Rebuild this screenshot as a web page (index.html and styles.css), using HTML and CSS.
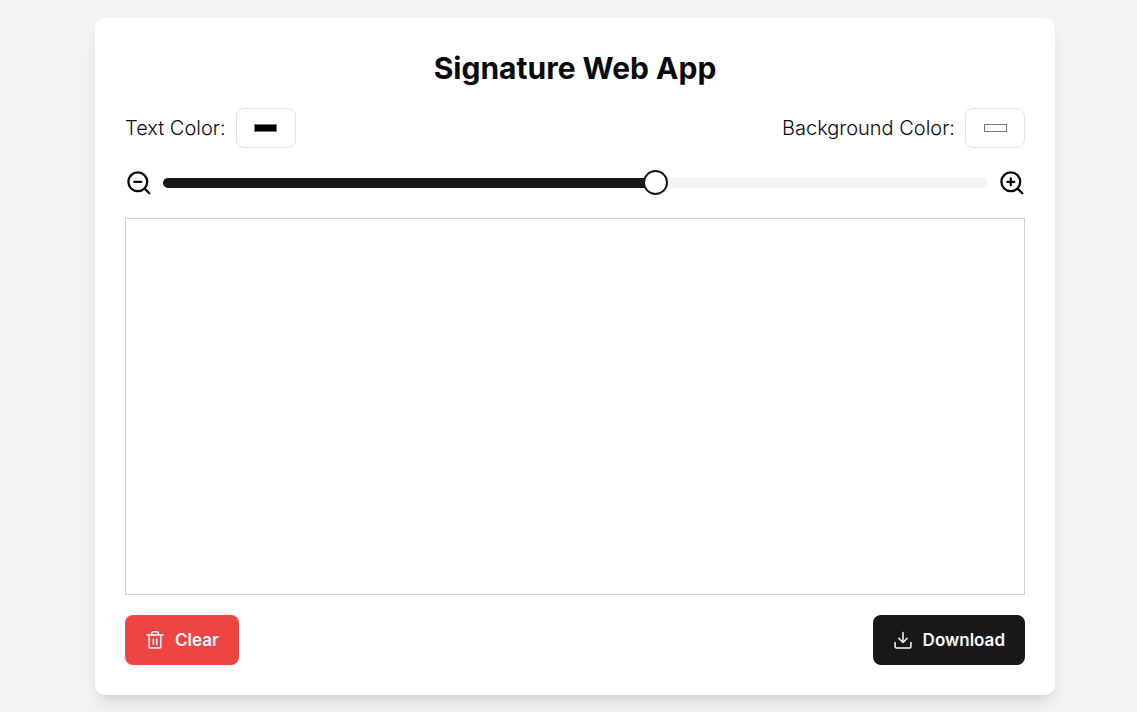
FILE: index.html
```html
<!DOCTYPE html>
<html lang="en">
<head>
<meta charset="utf-8">
<meta name="viewport" content="width=device-width, initial-scale=1">
<title>Signature Web App</title>
<link rel="stylesheet" href="styles.css">
</head>
<body>
<main class="card">
  <h1 class="title">Signature Web App</h1>
  <div class="row colors">
    <div class="field">
      <label for="text-color">Text Color:</label>
      <input class="color" type="color" id="text-color" value="#000000">
    </div>
    <div class="field">
      <label for="bg-color">Background Color:</label>
      <input class="color" type="color" id="bg-color" value="#ffffff">
    </div>
  </div>
  <div class="row zoom">
    <svg class="zoom-icon" viewBox="0 0 28 30" aria-hidden="true"><circle cx="12.800" cy="13.800" r="9.400"/><path d="M19.600 20.600l4.700 4.700M9.300 13.800h7"/></svg>
    <input class="slider" type="range" min="0" max="100" value="60" aria-label="Zoom">
    <svg class="zoom-icon plus" viewBox="0 0 27 30" aria-hidden="true"><circle cx="12.800" cy="13.800" r="9.400"/><path d="M19.600 20.600l4.700 4.700M9.300 13.800h7M12.800 10.300v7"/></svg>
  </div>
  <canvas class="pad" width="898" height="375" aria-label="Signature area"></canvas>
  <div class="row actions">
    <button class="button danger" type="button">
      <svg class="button-icon" viewBox="0 0 24 24" aria-hidden="true"><path d="M2.500 6h19M19 6v14c0 1-.500 1.500-1.500 1.500h-11C5.500 21.500 5 21 5 20V6M8 6V4c0-1 1-2 2-2h4c1 0 2 1 2 2v2M10 11v6M14 11v6"/></svg>
      Clear
    </button>
    <button class="button primary" type="button">
      <svg class="button-icon" viewBox="0 0 24 24" aria-hidden="true"><path d="M21.500 15v5a1.500 1.500 0 0 1-1.500 1.500H4A1.500 1.500 0 0 1 2.500 20v-5M7 10l5 5 5-5M12 15V3"/></svg>
      Download
    </button>
  </div>
</main>
</body>
</html>
```

FILE: styles.css
```css
* {
  box-sizing: border-box;
}

body {
  margin: 0;
  padding: 18px 0 17px 13px;
  background: #f3f4f6;
  color: #09090b;
  font-family: Inter, "Liberation Sans", sans-serif;
  font-size: 20px;
  line-height: 30px;
}

.card {
  max-width: 960px;
  margin: 0 auto;
  padding: 30px;
  display: flex;
  flex-direction: column;
  gap: 20px;
  background: #fff;
  border-radius: 10px;
  box-shadow: 0 12px 19px -4px rgb(0 0 0 / 0.1), 0 5px 8px -5px rgb(0 0 0 / 0.1);
}

.title {
  margin: 0;
  font-size: 30px;
  line-height: 40px;
  font-weight: 700;
  text-align: center;
}

.row {
  display: flex;
  align-items: center;
  justify-content: space-between;
}

.field {
  display: flex;
  align-items: center;
  gap: 10px;
  font-weight: 300;
}

.color {
  appearance: none;
  width: 60px;
  height: 40px;
  padding: 15px 17px 15px 18px;
  border: 1px solid #e4e4e7;
  border-radius: 8px;
  background: #fff;
}

#text-color {
  padding: 15px 18px 15px 17px;
}

.color::-webkit-color-swatch-wrapper {
  padding: 0;
}

.color::-webkit-color-swatch {
  border: 1px solid #777;
}

.zoom {
  gap: 10px;
}

.zoom-icon {
  flex: none;
  width: 28px;
  height: 30px;
  fill: none;
  stroke: currentColor;
  stroke-width: 2.3;
  stroke-linecap: round;
}

.plus {
  width: 27px;
}

.slider {
  appearance: none;
  flex: 1;
  min-width: 0;
  height: 26px;
  margin: 0;
  background: transparent;
}

.slider::-webkit-slider-runnable-track {
  height: 10px;
  border-radius: 5px;
  background: linear-gradient(to right, #18181b 60%, #f3f3f6 60%);
}

.slider::-webkit-slider-thumb {
  appearance: none;
  width: 25px;
  height: 25px;
  margin-top: -8px;
  border: 2px solid #18181b;
  border-radius: 50%;
  background: #fff;
}

.pad {
  display: block;
  width: 100%;
  height: auto;
  border: 1px solid #d1d1d4;
}

.button {
  height: 50px;
  padding: 0 20px;
  display: flex;
  align-items: center;
  gap: 10px;
  border: 0;
  border-radius: 8px;
  font: inherit;
  font-size: 17px;
  font-weight: 600;
  color: #fafafa;
}

.danger {
  background: #ef4444;
}

.primary {
  background: #18181b;
}

.button-icon {
  width: 20px;
  height: 20px;
  fill: none;
  stroke: currentColor;
  stroke-width: 1.8;
  stroke-linecap: round;
  stroke-linejoin: round;
}
```
